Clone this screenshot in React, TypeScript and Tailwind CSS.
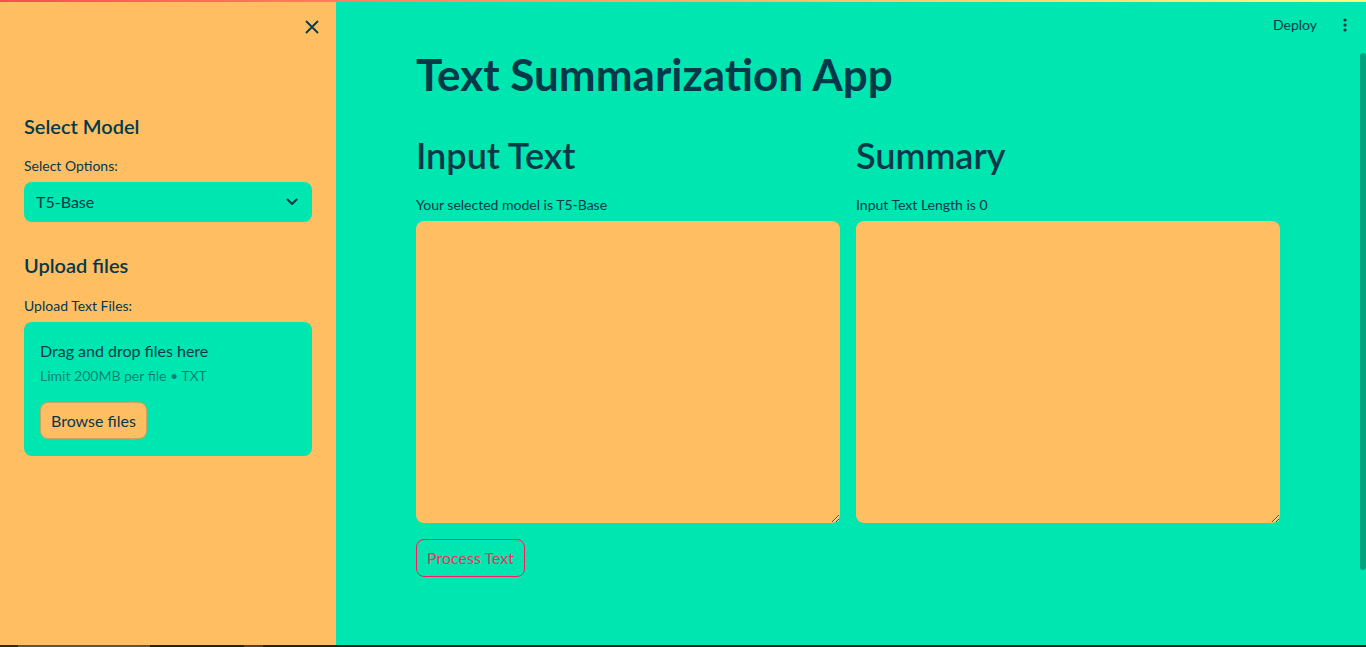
import React from "react";

const font = { fontFamily: "Lato, 'Noto Sans', sans-serif" };

export default function App() {
  return (
    <div className="relative flex h-[647px] w-[1366px] flex-col overflow-hidden text-[#05394a]" style={font}>
      <div className="absolute left-0 right-0 top-0 z-10 h-[2px] bg-gradient-to-r from-[#ff4b4b] to-[#fffd80]" />
      <div className="flex h-[645px] w-full">
        {/* Sidebar */}
        <aside className="flex w-[336px] shrink-0 flex-col bg-[#ffbe62] px-6">
          <div className="flex h-[52px] items-center justify-end pt-[2px]">
            <svg width="14" height="14" viewBox="0 0 14 14" className="mr-[-7px]">
              <path d="M1.5 1.5 L12.5 12.5 M12.5 1.5 L1.5 12.5" stroke="#05394a" strokeWidth="1.8" strokeLinecap="round" />
            </svg>
          </div>
          <h3 className="mt-[60px] text-[20px] font-semibold leading-[28px]">Select Model</h3>
          <div className="mt-[16px] text-[14px] leading-[20px]">Select Options:</div>
          <div className="mt-[6px] flex h-[40px] items-center justify-between rounded-lg bg-[#00e6b0] pl-3 pr-[14px]">
            <span className="text-[16px]">T5-Base</span>
            <svg width="12" height="8" viewBox="0 0 12 8">
              <path d="M1.5 1.5 L6 6 L10.5 1.5" stroke="#05394a" strokeWidth="2" fill="none" strokeLinecap="round" strokeLinejoin="round" />
            </svg>
          </div>
          <h3 className="mt-[29px] text-[20px] font-semibold leading-[28px]">Upload files</h3>
          <div className="mt-[17px] text-[14px] leading-[20px]">Upload Text Files:</div>
          <div className="mt-[6px] flex h-[134px] flex-col rounded-lg bg-[#00e6b0] px-4 pt-[18px]">
            <div className="text-[16px] leading-[22px]">Drag and drop files here</div>
            <div className="mt-[4px] text-[14px] leading-[20px] text-[#05394a]/60">Limit 200MB per file • TXT</div>
            <div className="mt-[16px]">
              <button className="h-[37px] rounded-lg border border-[#05394a]/20 bg-[#ffbe62] px-[10px] text-[16px]">Browse files</button>
            </div>
          </div>
        </aside>

        {/* Main */}
        <main className="relative flex flex-1 flex-col bg-[#00e6b0]">
          <div className="flex h-[49px] items-center justify-end pr-[19px]">
            <span className="mr-[26px] text-[14px]">Deploy</span>
            <svg width="4" height="14" viewBox="0 0 4 14">
              <circle cx="2" cy="2" r="1.6" fill="#05394a" />
              <circle cx="2" cy="7" r="1.6" fill="#05394a" />
              <circle cx="2" cy="12" r="1.6" fill="#05394a" />
            </svg>
          </div>
          <div className="absolute right-0 top-[53px] h-[517px] w-[6px] rounded-full bg-[#00a37d]" />
          <div className="flex flex-col pl-[80px]" style={{ width: 944 }}>
            <h1 className="mt-[-1px] text-[44px] font-bold leading-[52px]">Text Summarization App</h1>
            <div className="mt-[32px] grid grid-cols-2 gap-4">
              <div className="flex flex-col">
                <h2 className="text-[36px] font-semibold leading-[46px]">Input Text</h2>
                <div className="mt-[17px] text-[14px] leading-[20px]">Your selected model is T5-Base</div>
                <textarea className="mt-[6px] block h-[302px] w-full rounded-lg bg-[#ffbe62] outline-none" />
              </div>
              <div className="flex flex-col">
                <h2 className="text-[36px] font-semibold leading-[46px]">Summary</h2>
                <div className="mt-[17px] text-[14px] leading-[20px]">Input Text Length is 0</div>
                <textarea className="mt-[6px] block h-[302px] w-full rounded-lg bg-[#ffbe62] outline-none" />
              </div>
            </div>
            <div className="mt-[16px] flex">
              <button className="h-[38px] rounded-lg border border-[#ff1a5a] px-[10px] text-[16px] text-[#ff2b5e]">Process Text</button>
            </div>
          </div>
        </main>
      </div>
      <div className="flex h-[2px] w-full bg-[#0f2a22]">
        <div className="w-[18px] bg-[#2a2a2a]" />
        <div className="w-[132px] bg-[#555]" />
        <div className="w-[94px]" />
        <div className="w-[19px] bg-[#444]" />
      </div>
    </div>
  );
}
